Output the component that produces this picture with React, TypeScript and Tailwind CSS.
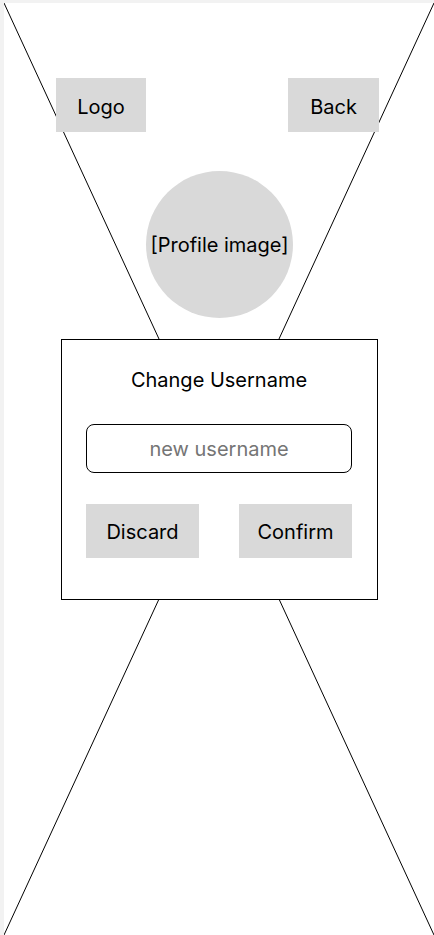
import React from "react";

export default function App() {
  return (
    <div className="w-[434px] h-[935px] bg-[#f2f2f2] pl-[4px] pt-[3px] overflow-hidden" style={{ fontFamily: "Inter, 'Noto Sans', sans-serif" }}>
      <div className="relative w-[430px] h-[932px] bg-white">
        <svg className="absolute inset-0 w-full h-full" viewBox="0 0 430 932" preserveAspectRatio="none">
          <line x1="0" y1="0" x2="430" y2="932" stroke="#000" strokeWidth="1" />
          <line x1="430" y1="0" x2="0" y2="932" stroke="#000" strokeWidth="1" />
        </svg>
        <div className="relative flex flex-col items-center pt-[75px]">
          <div className="w-full flex justify-between pl-[52px] pr-[55px]">
            <div className="w-[90px] h-[54px] pt-[3px] bg-[#d9d9d9] flex items-center justify-center text-[20px] text-black">Logo</div>
            <div className="w-[91px] h-[54px] pt-[3px] bg-[#d9d9d9] flex items-center justify-center text-[20px] text-black">Back</div>
          </div>
          <div className="mt-[39px] ml-[1px] w-[147px] h-[147px] rounded-full bg-[#d9d9d9] flex items-center justify-center text-[20px] text-black">[Profile image]</div>
          <div className="mt-[21px] w-[317px] h-[261px] border border-black bg-white flex flex-col items-center">
            <div className="mt-[28px] text-[20px] leading-[24px] text-black">Change Username</div>
            <div className="mt-[32px] w-[266px] h-[49px] border border-black rounded-[8px] flex items-center justify-center text-[20px] text-[#757575]">new username</div>
            <div className="mt-[31px] w-[266px] flex justify-between">
              <div className="w-[113px] h-[54px] pt-[2px] bg-[#d9d9d9] flex items-center justify-center text-[20px] text-black">Discard</div>
              <div className="w-[113px] h-[54px] pt-[2px] bg-[#d9d9d9] flex items-center justify-center text-[20px] text-black">Confirm</div>
            </div>
          </div>
        </div>
      </div>
    </div>
  );
}
